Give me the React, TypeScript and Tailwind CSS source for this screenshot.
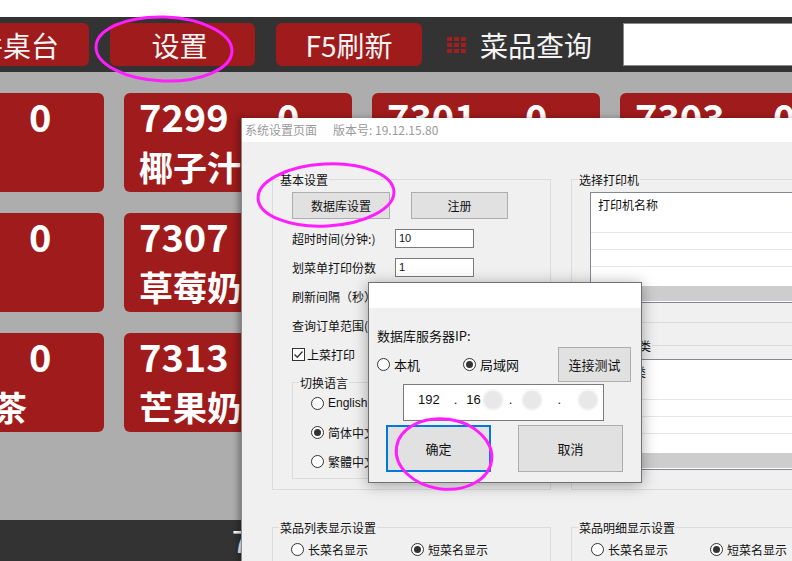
import React from 'react';

const tileRows = [
  [
    { no: '7297', name: '柠檬水' },
    { no: '7299', name: '椰子汁' },
    { no: '7301', name: '橙汁' },
    { no: '7303', name: '奶茶' },
  ],
  [
    { no: '7305', name: '红豆沙' },
    { no: '7307', name: '草莓奶昔' },
    { no: '7309', name: '可乐' },
    { no: '7311', name: '雪碧' },
  ],
  [
    { no: '7311', name: '珍珠奶茶' },
    { no: '7313', name: '芒果奶昔' },
    { no: '7315', name: '绿茶' },
    { no: '7317', name: '红茶' },
  ],
];

const Tile = ({ no, name }: { no: string; name: string }) => (
  <div className="w-[228px] h-[99px] shrink-0 overflow-hidden rounded-[6px] bg-[#9f1b1c] pt-[4px] pl-[15px] font-bold text-white">
    <div className="flex h-[38px] items-center text-[38px] leading-[38px]">
      <span className="w-[138px]">{no}</span>
      <span>0</span>
    </div>
    <div className="mt-[15px] whitespace-nowrap text-[34px] leading-[34px]">{name}</div>
  </div>
);

const Radio = ({ label, checked, big }: { label: string; checked?: boolean; big?: boolean }) => (
  <div className={`flex items-center gap-[4px] leading-[17px] text-[#111] ${big ? 'text-[13px]' : 'text-[12px]'}`}>
    <span className="flex h-[13px] w-[13px] shrink-0 items-center justify-center rounded-full border border-[#333] bg-white">
      {checked && <span className="h-[7px] w-[7px] rounded-full bg-[#333]" />}
    </span>
    <span>{label}</span>
  </div>
);

const WinButton = ({ label, className }: { label: string; className: string }) => (
  <div className={`flex items-center justify-center bg-[#e1e1e1] text-[#111] ${className}`}>
    {label}
  </div>
);

const Group = ({ title, className, children }: { title: string; className: string; children?: React.ReactNode }) => (
  <div className={`relative shrink-0 border border-[#dcdcdc] ${className}`}>
    <span className="absolute left-[6px] top-[-9px] bg-[#f0f0f0] px-[1px] text-[12px] leading-[17px] text-[#111]">
      {title}
    </span>
    {children}
  </div>
);

const FieldRow = ({ label, value }: { label: string; value?: string }) => (
  <div className="flex h-[29px] items-center text-[12px] text-[#111]">
    <span className="w-[103px] whitespace-nowrap">{label}</span>
    <div className="flex h-[19px] w-[79px] items-center border border-[#7a7a7a] bg-white pl-[3px] text-[11px] font-['Liberation_Sans',sans-serif]">
      {value}
    </div>
  </div>
);

const PrinterList = ({ header }: { header: string }) => (
  <div className="w-[230px] border border-[#828790] bg-white">
    <div className="flex h-[23px] items-center pl-[7px] text-[12px] text-[#111]">{header}</div>
    <div className="h-[17px] border-b border-[#e6e6e6]" />
    <div className="h-[17px] border-b border-[#e6e6e6]" />
    <div className="h-[17px] border-b border-[#e6e6e6]" />
    <div className="h-[19px]" />
    <div className="h-[15px] bg-[#cdcdcd]" />
    <div className="h-[1px]" />
  </div>
);

const SettingsWindow = () => (
  <div className="absolute left-[241px] top-[118px] h-[460px] w-[570px] border-l border-[#8a8a8a] bg-[#f0f0f0] shadow-[-3px_0_6px_rgba(0,0,0,0.3)]">
    <div className="flex h-[24px] items-center gap-[16px] bg-white pl-[3px] text-[12px] text-[#9a9a9a]">
      <span>系统设置页面</span>
      <span>版本号: 19.12.15.80</span>
    </div>
    <div className="pl-[30px] pt-[37px]">
      <div className="flex gap-[20px]">
        <Group title="基本设置" className="h-[311px] w-[279px] pl-[19px] pt-[12px]">
          <div className="flex gap-[21px] text-[12px]">
            <WinButton label="数据库设置" className="h-[27px] w-[98px] border border-[#adadad]" />
            <WinButton label="注册" className="h-[27px] w-[97px] border border-[#adadad]" />
          </div>
          <div className="mt-[5px]">
            <FieldRow label="超时时间(分钟:)" value="10" />
            <FieldRow label="划菜单打印份数" value="1" />
            <FieldRow label="刷新间隔（秒）" value="5" />
            <FieldRow label="查询订单范围(天)" value="1" />
            <div className="flex h-[29px] items-center gap-[2px] text-[#111]">
              <span className="flex h-[13px] w-[13px] items-center justify-center border border-[#333] bg-white">
                <svg width="11" height="11" viewBox="0 0 11 11">
                  <path d="M1.5 5.5 L4.3 8.3 L9.5 2.5" fill="none" stroke="#333" strokeWidth="1.3" />
                </svg>
              </span>
              <span className="text-[12px]">上菜打印</span>
            </div>
          </div>
          <Group title="切换语言" className="mt-[13px] h-[97px] w-[170px] pl-[18px] pt-[12px]">
            <div className="flex flex-col gap-[12px]">
              <div className="font-['Liberation_Sans',sans-serif]">
                <Radio label="English" />
              </div>
              <Radio label="简体中文" checked />
              <Radio label="繁體中文" />
            </div>
          </Group>
        </Group>
        <div className="flex flex-col">
          <Group title="选择打印机" className="h-[144px] w-[240px] pl-[18px] pt-[12px]">
            <PrinterList header="打印机名称" />
          </Group>
          <Group title="选择菜品分类" className="mt-[22px] h-[145px] w-[240px] pl-[18px] pt-[13px]">
            <PrinterList header="菜品分类" />
          </Group>
        </div>
      </div>
      <div className="mt-[37px] flex gap-[20px]">
        <Group title="菜品列表显示设置" className="flex h-[60px] w-[279px] items-start pl-[18px] pt-[13px]">
          <div className="w-[120px]">
            <Radio label="长菜名显示" />
          </div>
          <Radio label="短菜名显示" checked />
        </Group>
        <Group title="菜品明细显示设置" className="flex h-[60px] w-[240px] items-start pl-[19px] pt-[13px]">
          <div className="w-[119px]">
            <Radio label="长菜名显示" />
          </div>
          <Radio label="短菜名显示" checked />
        </Group>
      </div>
    </div>
  </div>
);

const Blur = ({ className }: { className: string }) => (
  <span className={`inline-block h-[20px] w-[20px] rounded-full bg-[#e8e8e8] blur-[1px] ${className}`} />
);

const DbDialog = () => (
  <div className="absolute left-[368px] top-[282px] h-[201px] w-[274px] border border-[#707070] bg-[#f0f0f0] shadow-[0_2px_14px_rgba(0,0,0,0.35)]">
    <div className="h-[25px] bg-white" />
    <div className="pl-[8px] pt-[19px] text-[13px] leading-[17px] text-[#111]">数据库服务器IP:</div>
    <div className="mt-[3px] flex h-[35px] items-center pl-[8px]">
      <div className="w-[86px]">
        <Radio label="本机" big />
      </div>
      <div className="w-[95px]">
        <Radio label="局域网" checked big />
      </div>
      <WinButton label="连接测试" className="h-[35px] w-[73px] border border-[#adadad] text-[13px]" />
    </div>
    <div className="ml-[34px] mt-[2px] flex h-[37px] w-[201px] items-start border border-[#7a7a7a] bg-white pl-[14px] pt-[5px] font-['Liberation_Sans',sans-serif] text-[13px] text-[#111]">
      <span>192</span>
      <span className="ml-[14px]">.</span>
      <span className="ml-[9px]">16</span>
      <Blur className="ml-[2px]" />
      <span className="ml-[6px]">.</span>
      <Blur className="ml-[10px]" />
      <span className="ml-[15px]">.</span>
      <Blur className="ml-[17px]" />
    </div>
    <div className="ml-[17px] mt-[4px] flex gap-[27px] text-[13px]">
      <WinButton label="确定" className="h-[47px] w-[105px] border-2 border-[#0078d7]" />
      <WinButton label="取消" className="h-[47px] w-[105px] border border-[#adadad]" />
    </div>
  </div>
);

const Marks = () => (
  <svg className="pointer-events-none absolute left-0 top-0" width="792" height="561">
    <g fill="none" stroke="#ff1eff" strokeWidth="3">
      <ellipse cx="164" cy="49" rx="68" ry="32" transform="rotate(2 164 49)" />
      <ellipse cx="326" cy="195" rx="68" ry="31" transform="rotate(-3 326 195)" />
      <ellipse cx="444" cy="454" rx="48" ry="35" transform="rotate(8 444 454)" />
    </g>
  </svg>
);

export default function App() {
  return (
    <div className="relative h-[561px] w-[792px] overflow-hidden bg-white font-['Noto_Sans_CJK_SC',sans-serif]">
      <div className="h-[17px] bg-white" />
      <div className="flex h-[55px] items-center bg-[#333333]">
        <div className="ml-[-55px] flex h-[43px] w-[144px] shrink-0 items-center justify-center rounded-[6px] bg-[#9f1b1c] text-[28px] text-[#f4f4f4]">
          并桌台
        </div>
        <div className="ml-[21px] flex h-[43px] w-[145px] shrink-0 items-center justify-center rounded-[6px] bg-[#9f1b1c] pr-[6px] text-[28px] text-[#f4f4f4]">
          设置
        </div>
        <div className="ml-[21px] flex h-[43px] w-[146px] shrink-0 items-center justify-center rounded-[6px] bg-[#9f1b1c] text-[28px] text-[#f4f4f4]">
          F5刷新
        </div>
        <div className="ml-[25px] grid shrink-0 grid-cols-3 gap-x-[2px] gap-y-[2px]">
          {Array.from({ length: 9 }).map((_, i) => (
            <span key={i} className="h-[4px] w-[5px] bg-[#a51d1e]" />
          ))}
        </div>
        <span className="ml-[14px] shrink-0 text-[28px] text-[#f4f4f4]">菜品查询</span>
        <div className="ml-[31px] h-[43px] w-[200px] shrink-0 border border-[#8a8a8a] bg-white" />
      </div>
      <div className="flex h-[448px] flex-col gap-[21px] overflow-hidden bg-[#adadad] pt-[21px]">
        {tileRows.map((row, r) => (
          <div key={r} className="ml-[-124px] flex gap-[20px]">
            {row.map((t, c) => (
              <Tile key={c} no={t.no} name={t.name} />
            ))}
          </div>
        ))}
      </div>
      <div className="flex h-[41px] items-center bg-[#333333] pl-[232px] text-[30px] text-white">
        7
      </div>
      <SettingsWindow />
      <DbDialog />
      <Marks />
    </div>
  );
}
